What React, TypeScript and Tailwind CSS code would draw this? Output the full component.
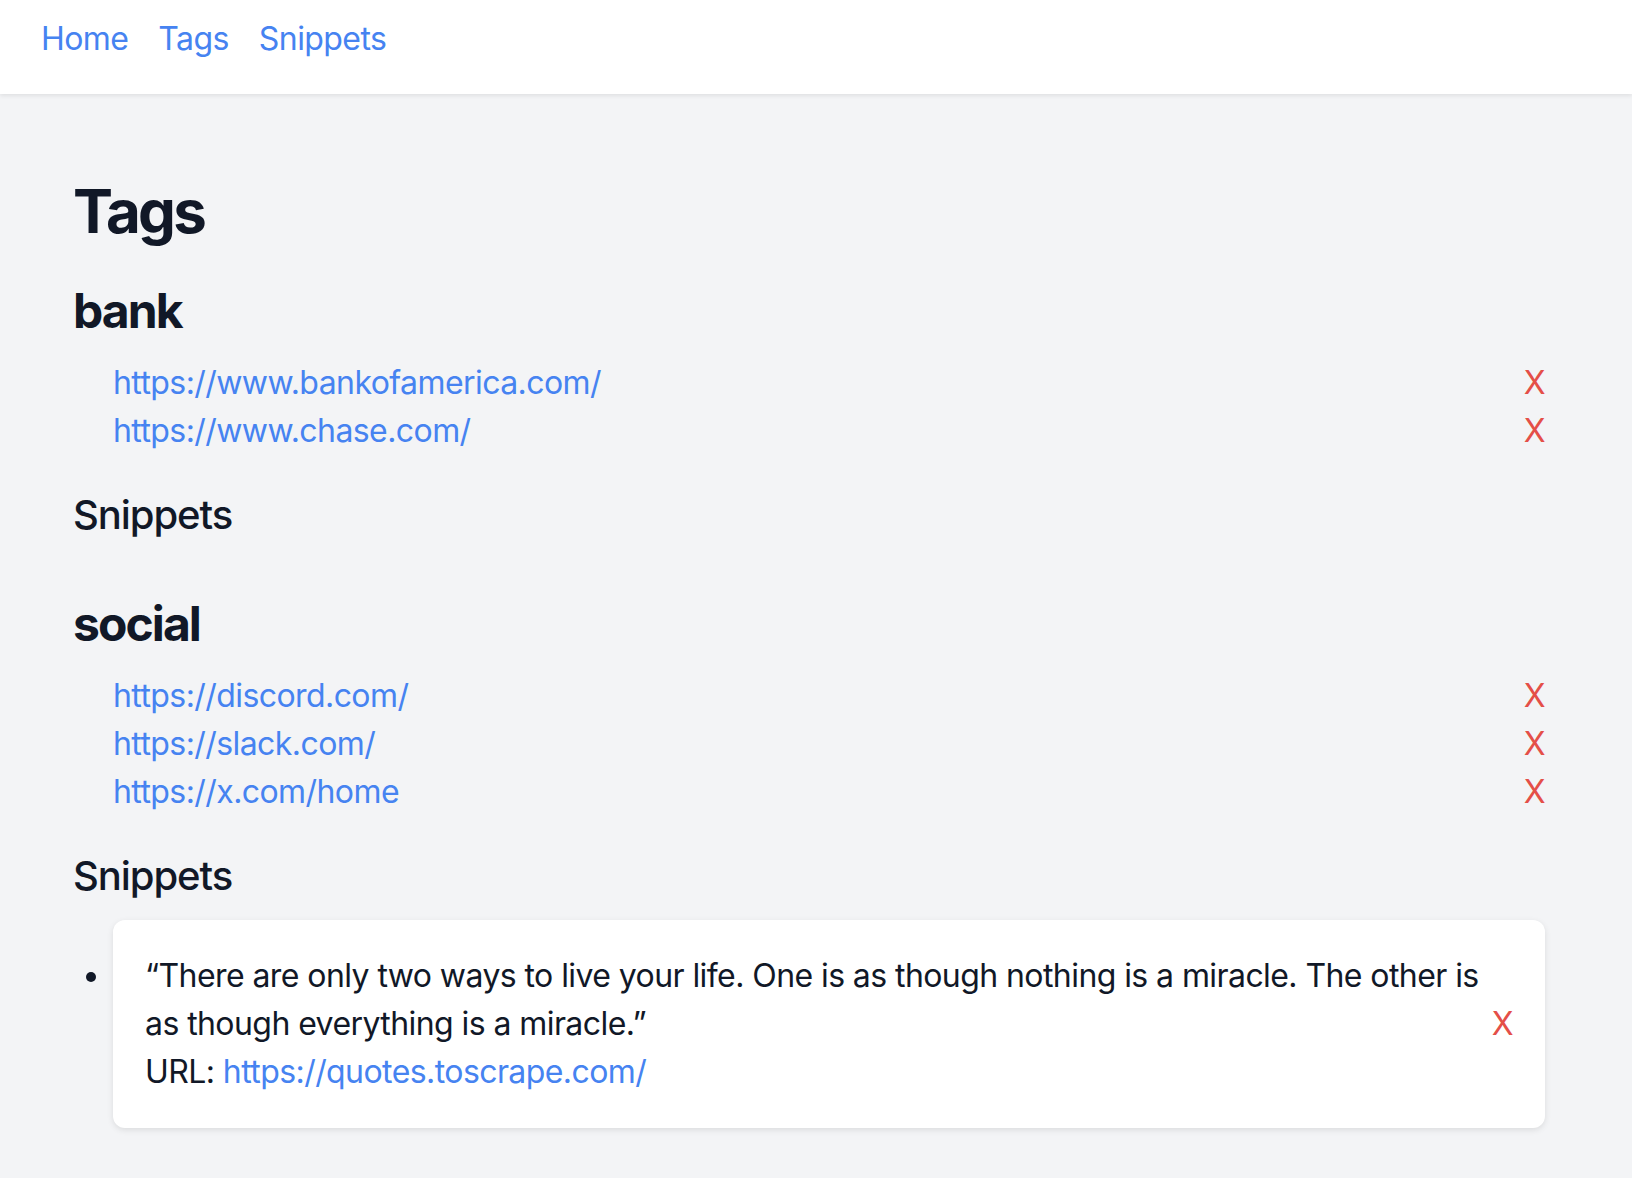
import React from "react";

interface Snippet {
  text: string;
  url: string;
}

interface Tag {
  name: string;
  links: string[];
  snippets: Snippet[];
}

const tags: Tag[] = [
  {
    name: "bank",
    links: ["https://www.bankofamerica.com/", "https://www.chase.com/"],
    snippets: [],
  },
  {
    name: "social",
    links: ["https://discord.com/", "https://slack.com/", "https://x.com/home"],
    snippets: [
      {
        text: "\u201cThere are only two ways to live your life. One is as though nothing is a miracle. The other is as though everything is a miracle.\u201d",
        url: "https://quotes.toscrape.com/",
      },
    ],
  },
];

function TagSection({ tag }: { tag: Tag }) {
  return (
    <section className="mb-[32px]">
      <h2 className="text-[48px] leading-[64px] font-bold tracking-[-0.04em] mb-[16px]">{tag.name}</h2>
      <ul className="pl-[40px] mb-[32px]">
        {tag.links.map((link) => (
          <li key={link} className="flex justify-between items-center text-[32px] leading-[48px]">
            <a href={link} className="text-[#4683f1]">
              {link}
            </a>
            <button className="text-[#e44f48]">X</button>
          </li>
        ))}
      </ul>
      <h3 className="text-[40px] leading-[56px] font-medium tracking-[-0.027em] mb-[16px]">Snippets</h3>
      {/* min-h keeps the empty list from collapsing the margins */}
      <ul className="list-disc pl-[40px] min-h-[1px]">
        {tag.snippets.map((snippet) => (
          <li
            key={snippet.url}
            className="bg-white rounded-[12px] shadow-[0_2px_6px_rgba(0,0,0,0.1)] p-[32px] text-[32px] leading-[48px]"
          >
            <div className="flex justify-between items-center">
              <div className="max-w-[1345px]">
                <p>{snippet.text}</p>
                <p>
                  URL:{" "}
                  <a href={snippet.url} className="text-[#4683f1]">
                    {snippet.url}
                  </a>
                </p>
              </div>
              <button className="text-[#e44f48]">X</button>
            </div>
          </li>
        ))}
      </ul>
    </section>
  );
}

export default function App() {
  return (
    <div className="min-h-screen bg-[#f3f4f6] text-[#111827] tracking-[-0.036em] font-['Inter','Noto_Sans',sans-serif]">
      <nav className="bg-white h-[94px] shadow-[0_2px_4px_rgba(0,0,0,0.08)] pl-[41px] pt-[15px] flex items-start gap-[30px] text-[32px] leading-[48px]">
        <a href="#" className="text-[#4683f1]">
          Home
        </a>
        <a href="#" className="text-[#4683f1]">
          Tags
        </a>
        <a href="#" className="text-[#4683f1]">
          Snippets
        </a>
      </nav>
      <main className="pl-[73px] pr-[87px] pt-[81px] pb-[40px]">
        <h1 className="text-[60px] leading-[72px] font-bold tracking-[-0.045em] mb-[32px]">Tags</h1>
        {tags.map((tag) => (
          <TagSection key={tag.name} tag={tag} />
        ))}
      </main>
    </div>
  );
}
